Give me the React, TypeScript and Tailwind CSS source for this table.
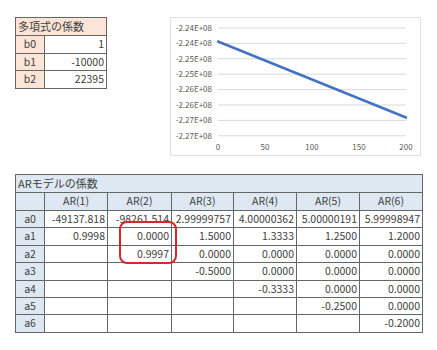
import React from 'react'

const font = { fontFamily: '"Noto Sans CJK JP", "Noto Sans", sans-serif' }

const polyRows = [
  ['b0', '1'],
  ['b1', '-10000'],
  ['b2', '22395'],
]

const arHeaders = ['AR(1)', 'AR(2)', 'AR(3)', 'AR(4)', 'AR(5)', 'AR(6)']
const arWidths = ['w-[63px]', 'w-[64px]', 'w-[62px]', 'w-[63px]', 'w-[63px]', 'w-[63px]']

const arRows: string[][] = [
  ['-49137.818', '-98261.514', '2.99999757', '4.00000362', '5.00000191', '5.99998947'],
  ['0.9998', '0.0000', '1.5000', '1.3333', '1.2500', '1.2000'],
  ['', '0.9997', '0.0000', '0.0000', '0.0000', '0.0000'],
  ['', '', '-0.5000', '0.0000', '0.0000', '0.0000'],
  ['', '', '', '-0.3333', '0.0000', '0.0000'],
  ['', '', '', '', '-0.2500', '0.0000'],
  ['', '', '', '', '', '-0.2000'],
]

const yLabels = ['-2.24E+08', '-2.24E+08', '-2.25E+08', '-2.25E+08', '-2.26E+08', '-2.26E+08', '-2.27E+08', '-2.27E+08']
const xLabels = ['0', '50', '100', '150', '200']

function Chart() {
  const gridY = yLabels.map((_, i) => 10 + i * 15.4)
  return (
    <div className="w-[251px] h-[139px] border border-[#e0e0e0] bg-white">
      <svg width="249" height="137" viewBox="0 0 249 137">
        {gridY.map((y, i) => (
          <g key={i}>
            <line x1="47" x2="235" y1={y} y2={y} stroke="#d9d9d9" strokeWidth="1" />
            <text x="41" y={y + 2.8} textAnchor="end" fontSize="8" fill="#595959" style={font}>
              {yLabels[i]}
            </text>
          </g>
        ))}
        {xLabels.map((l, i) => (
          <text key={l} x={47 + i * 47} y="132" textAnchor="middle" fontSize="8" fill="#595959" style={font}>
            {l}
          </text>
        ))}
        <line x1="47" y1="23.5" x2="235" y2="99.5" stroke="#4472c4" strokeWidth="2.5" strokeLinecap="round" />
      </svg>
    </div>
  )
}

export default function App() {
  return (
    <div className="w-[437px] h-[350px] bg-white text-[#404040] text-[10.5px]" style={font}>
      <div className="flex pt-[17px] pl-[15px]">
        {/* 多項式の係数 */}
        <table className="border-collapse w-[92px] h-fit">
          <tbody>
            <tr className="h-[18px]">
              <td colSpan={2} className="border border-[#666] bg-[#fce4d6] px-[2px] leading-none text-[11px]">
                多項式の係数
              </td>
            </tr>
            {polyRows.map(([k, v]) => (
              <tr key={k} className="h-[17.7px]">
                <td className="w-[29px] border border-[#666] bg-[#fce4d6] text-center leading-none">{k}</td>
                <td className="w-[63px] border border-[#666] text-right pr-[2px] leading-none">{v}</td>
              </tr>
            ))}
          </tbody>
        </table>
        <div className="ml-[63px]">
          <Chart />
        </div>
      </div>

      {/* ARモデルの係数 */}
      <div className="relative mt-[18px] ml-[15px] w-fit">
        <table className="border-collapse">
          <tbody>
            <tr className="h-[18px]">
              <td colSpan={7} className="border border-[#666] bg-[#dde8f3] px-[2px] leading-none text-[11px]">
                ARモデルの係数
              </td>
            </tr>
            <tr className="h-[18px]">
              <td className="w-[29px] border border-[#666] bg-[#dde8f3]"></td>
              {arHeaders.map((h, i) => (
                <td key={h} className={`${arWidths[i]} border border-[#666] bg-[#dde8f3] text-center leading-none`}>
                  {h}
                </td>
              ))}
            </tr>
            {arRows.map((row, r) => (
              <tr key={r} className="h-[17.4px]">
                <td className="border border-[#666] bg-[#dde8f3] text-center leading-none">a{r}</td>
                {row.map((v, c) => (
                  <td key={c} className="border border-[#666] text-right pr-[2px] leading-none whitespace-nowrap">
                    {v}
                  </td>
                ))}
              </tr>
            ))}
          </tbody>
        </table>
        <div className="absolute left-[104px] top-[47px] w-[58px] h-[43px] border-2 border-[#d9262b] rounded-[8px]" />
      </div>
    </div>
  )
}
